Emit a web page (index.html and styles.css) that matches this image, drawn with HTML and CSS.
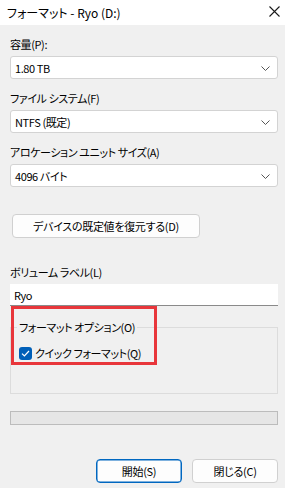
FILE: index.html
```html
<!DOCTYPE html>
<html lang="ja">
<head>
    <meta charset="UTF-8">
    <title>フォーマット - Ryo (D:)</title>
    <meta name="viewport" content="width=device-width, initial-scale=1.0">
    <link rel="stylesheet" href="styles.css">
</head>
<body>

    <header class="titlebar">
        <span class="title">フォーマット - Ryo (D:)</span>
        <svg class="close" width="11" height="11" viewBox="0 0 11 11">
            <path d="M0.5 0.5 L10.5 10.5 M10.5 0.5 L0.5 10.5" stroke="#1a1a1a" stroke-width="1.1" fill="none"/>
        </svg>
    </header>

    <main class="dialog">
        <div class="field">
            <label>容量(P):</label>
            <div class="combo">
                <span>1.80 TB</span>
                <svg class="chev" width="9" height="5" viewBox="0 0 9 5"><path d="M0.5 0.5 L4.5 4.5 L8.5 0.5" stroke="#555" fill="none"/></svg>
            </div>
        </div>

        <div class="field">
            <label>ファイル システム(F)</label>
            <div class="combo">
                <span>NTFS (既定)</span>
                <svg class="chev" width="9" height="5" viewBox="0 0 9 5"><path d="M0.5 0.5 L4.5 4.5 L8.5 0.5" stroke="#555" fill="none"/></svg>
            </div>
        </div>

        <div class="field">
            <label>アロケーション ユニット サイズ(A)</label>
            <div class="combo">
                <span>4096 バイト</span>
                <svg class="chev" width="9" height="5" viewBox="0 0 9 5"><path d="M0.5 0.5 L4.5 4.5 L8.5 0.5" stroke="#555" fill="none"/></svg>
            </div>
        </div>

        <button class="btn restore">デバイスの既定値を復元する(D)</button>

        <div class="field volume">
            <label>ボリューム ラベル(L)</label>
            <div class="textbox">Ryo</div>
        </div>

        <div class="options">
            <fieldset class="group">
                <legend>フォーマット オプション(O)</legend>
                <div class="check-row">
                    <span class="checkbox">
                        <svg width="9" height="7" viewBox="0 0 9 7"><path d="M1 3.6 L3.4 6 L8 1" stroke="#fff" stroke-width="1.2" fill="none"/></svg>
                    </span>
                    <span>クイック フォーマット(Q)</span>
                </div>
            </fieldset>
            <div class="highlight"></div>
        </div>

        <div class="progress"></div>

        <div class="actions">
            <button class="btn default">開始(S)</button>
            <button class="btn">閉じる(C)</button>
        </div>
    </main>

</body>
</html>
```

FILE: styles.css
```css
body {
    margin: 0;
    background-color: #f0f0f0;
    font-family: "Noto Sans CJK JP", sans-serif;
    font-size: 12px;
    font-feature-settings: "palt";
    color: #000;
}
.titlebar {
    height: 25px;
    background-color: #ffffff;
    display: flex;
    align-items: center;
    justify-content: space-between;
    padding: 0 5px 0 7px;
}
.title {
    font-size: 12px;
    line-height: 16px;
}
.close {
    margin-bottom: 2px;
}
.dialog {
    padding: 11px 7px 0 10px;
    display: flex;
    flex-direction: column;
    font-size: 11px;
    letter-spacing: -0.4px;
}
.field {
    display: flex;
    flex-direction: column;
    gap: 4px;
    margin-bottom: 11px;
}
.field label {
    line-height: 16px;
}
.combo {
    height: 21px;
    background-color: #fff;
    border: 1px solid #d3d3d3;
    border-radius: 3px;
    display: flex;
    align-items: center;
    justify-content: space-between;
    padding: 0 7px 0 4px;
}
.chev {
    margin-top: 1px;
}
.btn {
    font-family: inherit;
    font-size: 11px;
    letter-spacing: -0.3px;
    font-feature-settings: "palt";
    color: #000;
    background-color: #fdfdfd;
    border: 1px solid #d0d0d0;
    border-radius: 4px;
    height: 24px;
    padding: 0;
    line-height: 16px;
}
.restore {
    width: 188px;
    margin: 16px 0 0 2px;
}
.volume {
    margin-top: 26px;
    margin-bottom: 0;
}
.textbox {
    height: 21px;
    background-color: #fff;
    border-bottom: 1px solid #8a8a8a;
    display: flex;
    align-items: center;
    padding-left: 4px;
}
.options {
    position: relative;
    margin-top: 13px;
}
.group {
    margin: 0;
    border: 1px solid #dcdcdc;
    padding: 10px 8px 0 8px;
    height: 75px;
    box-sizing: border-box;
}
.group legend {
    padding: 0 2px;
    margin-left: -2px;
    line-height: 16px;
}
.check-row {
    display: flex;
    align-items: center;
    gap: 3px;
}
.checkbox {
    width: 13px;
    height: 13px;
    border-radius: 3px;
    background-color: #005fb8;
    display: flex;
    align-items: center;
    justify-content: center;
}
.highlight {
    position: absolute;
    left: 1px;
    top: -13px;
    width: 140px;
    height: 53px;
    border: 3px solid #e8363b;
}
.progress {
    margin-top: 17px;
    height: 12px;
    background-color: #e6e6e6;
    border: 1px solid #bcbcbc;
}
.actions {
    display: flex;
    justify-content: flex-end;
    gap: 10px;
    margin-top: 34px;
}
.actions .btn {
    width: 86px;
}
.btn.default {
    border: 1px solid #0067c0;
    box-shadow: inset 0 0 0 0.5px #0067c0;
}
```
